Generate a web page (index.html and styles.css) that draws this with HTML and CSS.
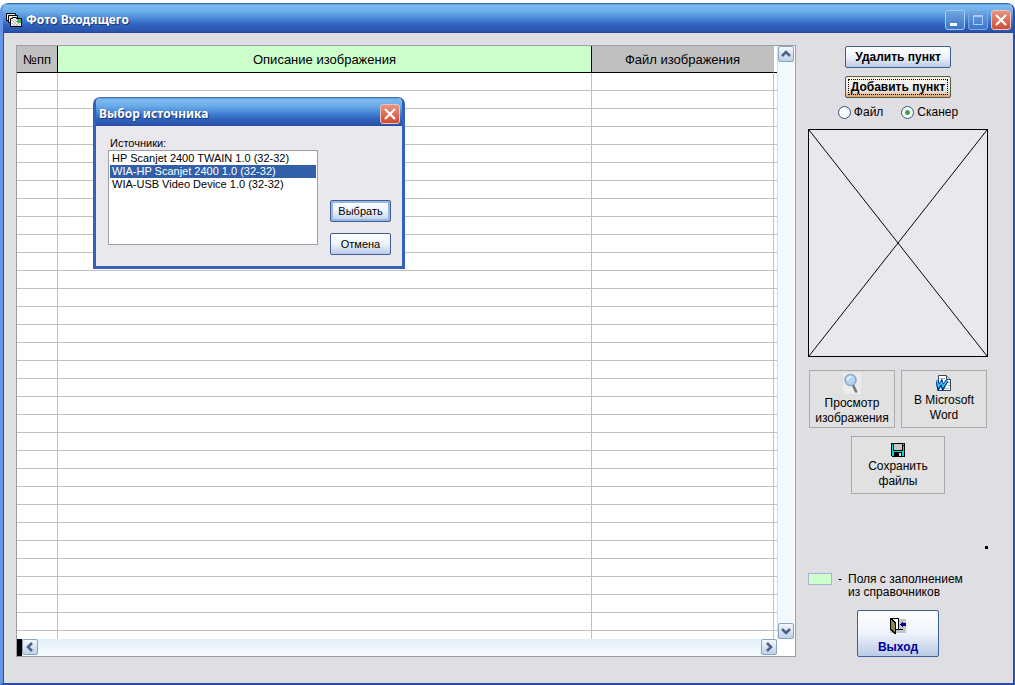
FILE: index.html
```html
<!DOCTYPE html>
<html lang="ru">
<head>
  <meta charset="UTF-8">
  <meta name="viewport" content="width=device-width, initial-scale=1.0">
  <title>Фото Входящего</title>
  <link rel="stylesheet" href="styles.css">
</head>
<body>

  <div class="window">

    <header class="titlebar">
      <svg class="app-icon" width="16" height="16" viewBox="0 0 16 16">
        <path d="M.5 1.500h9v7h-9z" fill="#d8f0d8" stroke="#000"/>
        <path d="M2.500 3.500h9v7h-9z" fill="#e8f4e8" stroke="#000"/>
        <path d="M4.500 6.500h2v-1h4v1h5v8h-11z" fill="#eef2ee" stroke="#000"/>
        <path d="M11 7h4v4h-4z" fill="#49b84e"/>
        <path d="M6 8l6 6M6 11l3 3M9 8l5 5" stroke="#9fb0a0"/>
      </svg>
      <h1>Фото Входящего</h1>
      <div class="caption-buttons">
        <button class="caption-btn" aria-label="Свернуть"><svg width="18" height="18" viewBox="0 0 18 18"><path d="M4 12h7v3H4z" fill="#fff"/></svg></button>
        <button class="caption-btn dim" aria-label="Развернуть"><svg width="18" height="18" viewBox="0 0 18 18"><path d="M4.500 4.500h9v9h-9zM4 5.500h10" fill="none" stroke="#a9cdf8"/></svg></button>
        <button class="caption-btn close" aria-label="Закрыть"><svg width="18" height="18" viewBox="0 0 18 18"><path d="M4 4l10 10M14 4L4 14" stroke="#fff" stroke-width="2.200"/></svg></button>
      </div>
    </header>

    <main class="client">

      <section class="grid">
        <div class="grid-body">
          <table>
            <thead>
              <tr>
                <th class="col-num">№пп</th>
                <th class="col-desc">Описание изображения</th>
                <th class="col-file">Файл изображения</th>
                <th class="col-end"></th>
              </tr>
            </thead>
            <tbody></tbody>
          </table>
        </div>

        <div class="scroll-v">
          <button class="arrow" aria-label="Вверх"><svg width="14" height="14" viewBox="0 0 14 14"><path d="M3 9l4-4 4 4" fill="none" stroke="#4d6185" stroke-width="2.500"/></svg></button>
          <button class="arrow" aria-label="Вниз"><svg width="14" height="14" viewBox="0 0 14 14"><path d="M3 5l4 4 4-4" fill="none" stroke="#4d6185" stroke-width="2.500"/></svg></button>
        </div>

        <div class="scroll-h">
          <button class="arrow" aria-label="Влево"><svg width="14" height="14" viewBox="0 0 14 14"><path d="M9 3L5 7l4 4" fill="none" stroke="#4d6185" stroke-width="2.500"/></svg></button>
          <button class="arrow" aria-label="Вправо"><svg width="14" height="14" viewBox="0 0 14 14"><path d="M5 3l4 4-4 4" fill="none" stroke="#4d6185" stroke-width="2.500"/></svg></button>
        </div>
      </section>

      <aside class="panel">
        <button class="btn btn-bold">Удалить пункт</button>
        <button class="btn btn-bold btn-active">Добавить пункт</button>

        <div class="radios">
          <label><input type="radio" name="source" value="file">Файл</label>
          <label><input type="radio" name="source" value="scanner" checked>Сканер</label>
        </div>

        <svg class="preview" viewBox="0 0 180 228" preserveAspectRatio="none">
          <path d="M0 0l180 228M180 0L0 228" stroke="#000"/>
        </svg>

        <div class="tools">
          <button class="tool">
            <svg width="18" height="21" viewBox="0 0 18 21">
              <path d="M0 0h18v21H0z" fill="#ececec"/>
              <path d="M10 12l3 6.500" stroke="#77777f" stroke-width="2.600" stroke-linecap="round"/>
              <circle cx="7.500" cy="7" r="5.500" fill="#b5d6f2" stroke="#8fa6cb" stroke-width="1.400"/>
              <path d="M4.500 7a3.500 3.500 0 0 1 4-3" fill="none" stroke="#f2f9ff" stroke-width="1.500"/>
            </svg>
            <span>Просмотр<br>изображения</span>
          </button>
          <button class="tool">
            <svg width="16" height="16" viewBox="0 0 16 16">
              <path d="M2.500 .5h8l4 4v11h-12z" fill="#fff" stroke="#33435e"/>
              <path d="M10.500 .5v4h4" fill="#cfd9ec" stroke="#33435e"/>
              <path d="M4 3.500h5M12 7.500h2M12 10.500h2M5 13.500h8" stroke="#a9b8d6"/>
              <path d="M1 5.500l1.500 7 3-5 1.500 5 4-7" fill="none" stroke="#0b2f86" stroke-width="3.400"/>
              <path d="M1 5.500l1.500 6 3-4 1.500 4 4-6" fill="none" stroke="#35c5f5" stroke-width="1.500"/>
            </svg>
            <span>В Microsoft<br>Word</span>
          </button>
        </div>
        <button class="tool tool-save">
          <svg width="14" height="14" viewBox="0 0 14 14" shape-rendering="crispEdges">
            <path d="M0 0h14v14H1L0 13z" fill="#000"/>
            <path d="M1 1h1v7h10V3h1v10h-2V9H3v4H1z" fill="#00d8d8"/>
            <path d="M3 1h8v6H3zM12 1h1v1h-1z" fill="#c6c6c6"/>
            <path d="M8 10h2v3H8z" fill="#d8d8d8"/>
          </svg>
          <span>Сохранить<br>файлы</span>
        </button>

        <i class="dot"></i>

        <div class="legend">
          <i class="swatch"></i>
          <span>-</span>
          <p>Поля с заполнением<br>из справочников</p>
        </div>

        <button class="btn exit">
          <svg width="16" height="16" viewBox="0 0 16 16" shape-rendering="crispEdges">
            <path d="M0 1h16v14H0z" fill="#c4c4c4"/>
            <path d="M0 0h9v11h4v1H0z" fill="#000"/>
            <path d="M3 1h5v10H3z" fill="#fff"/>
            <path d="M0 0h1l5 4v12H5l-5-4z" fill="#000"/>
            <path d="M1 2l4 3v9l-4-3z" fill="#8d8947"/>
            <path d="M10 6l3-3v2h3v3h-3v2z" fill="#000088"/>
          </svg>
          <span>Выход</span>
        </button>
      </aside>

    </main>

    <div class="dialog" role="dialog" aria-labelledby="dialog-title">
      <div class="titlebar dialog-title">
        <h2 id="dialog-title">Выбор источника</h2>
        <button class="caption-btn close" aria-label="Закрыть"><svg width="18" height="18" viewBox="0 0 18 18"><path d="M4 4l10 10M14 4L4 14" stroke="#fff" stroke-width="2.200"/></svg></button>
      </div>
      <div class="dialog-body">
        <div class="sources">
          <label for="sources">Источники:</label>
          <select id="sources" size="7">
            <option>HP Scanjet 2400 TWAIN 1.0 (32-32)</option>
            <option selected>WIA-HP Scanjet 2400 1.0 (32-32)</option>
            <option>WIA-USB Video Device 1.0 (32-32)</option>
          </select>
        </div>
        <div class="dialog-buttons">
          <button class="btn btn-default">Выбрать</button>
          <button class="btn">Отмена</button>
        </div>
      </div>
    </div>

  </div>

  <script>
    // пустые строки таблицы
    const tbody = document.querySelector("tbody")

    for(let i = 0; i < 32; i++){
      tbody.insertAdjacentHTML("beforeend", "<tr><td></td><td></td><td></td><td></td></tr>")
    }
  </script>
</body>
</html>
```

FILE: styles.css
```css
*{
  box-sizing: border-box;
}

body{
  margin: 0;
  padding-top: 3px;
  height: 100vh;
  background-color: #fff;
  color: #000;
  font-family: "Liberation Sans", Arial, sans-serif;
  font-size: 12px;
}

button, select, input{
  font: inherit;
  color: inherit;
  margin: 0;
  padding: 0;
}

h1, h2, p{
  margin: 0;
}

svg{
  display: block;
}

.window{
  position: relative;
  display: flex;
  flex-direction: column;
  height: 100%;
  border: 2px solid #2a4fa5;
  border-width: 0 2px 2px 3px;
  border-left-color: #6596e6;
  border-radius: 8px 8px 0 0;
  background-color: #dfdee3;
  overflow: hidden;
}

.titlebar{
  display: flex;
  align-items: center;
  gap: 4px;
  height: 30px;
  flex: none;
  padding: 4px 2px 0 3px;
  background: linear-gradient(#2c57a8 0, #7db9ee 2px, #6fb0ea 8px, #4585d6 16px, #2f62bd 22px, #2b55ad 28px, #23459a 100%);
}

.titlebar h1, .titlebar h2{
  flex: 1;
  font-family: "Noto Sans", Tahoma, sans-serif;
  font-size: 12px;
  line-height: 16px;
  font-weight: bold;
  color: #fff;
  text-shadow: 1px 1px 1px #173578;
}

.caption-buttons{
  display: flex;
  gap: 3px;
}

.caption-btn{
  width: 20px;
  height: 20px;
  border: 1px solid #a9cdf5;
  border-radius: 3px;
  background: linear-gradient(#6ea6e4, #3c74c9);
}

.caption-btn.dim{
  border-color: #78aae6;
}

.caption-btn.close{
  border-color: #f0c4bd;
  background: linear-gradient(#e89481, #d04a30);
}

.client{
  display: flex;
  gap: 12px;
  flex: 1;
  min-height: 0;
  padding: 12px 25px 26px 12px;
  border-left: 1px solid #2a4fa5;
}

/* таблица */

.grid{
  display: grid;
  grid-template-columns: 1fr 18px;
  grid-template-rows: 1fr 17px;
  flex: 1;
  min-width: 0;
  border: 1px solid #9c9ea6;
  background-color: #fff;
}

.grid-body{
  min-height: 0;
  overflow: hidden;
}

table{
  width: 100%;
  table-layout: fixed;
  border-collapse: separate;
  border-spacing: 0;
}

th{
  height: 27px;
  padding: 0;
  border-right: 1px solid #000;
  border-bottom: 1px solid #000;
  background-color: #c0c0c0;
  font-size: 13px;
  font-weight: normal;
}

.col-num{ width: 41px; }
.col-desc{ background-color: #ccffcc; }
.col-file{ width: 182px; border-right-color: #c0c0c0; }
.col-end{ width: 3px; border-right: 0; background-color: #fff; }

td{
  height: 18px;
  padding: 0;
  border-right: 1px solid #c0c0c0;
  border-bottom: 1px solid #c0c0c0;
}

td:last-child{
  border-right: 0;
}

.scroll-v, .scroll-h{
  display: flex;
  justify-content: space-between;
}

.scroll-v{
  flex-direction: column;
  width: 17px;
  border-left: 1px solid #d5e0ec;
  background-color: #f4f9fe;
}

.scroll-h{
  border-left: 5px solid #000;
  background: linear-gradient(#e1eefb, #fafdff);
}

.arrow{
  width: 16px;
  height: 16px;
  border: 1px solid #8ba3bd;
  border-radius: 2px;
  background: linear-gradient(#f2f8fd, #bed2e9);
}

/* правая панель */

.panel{
  display: flex;
  flex-direction: column;
  align-items: center;
  width: 180px;
}

.btn{
  height: 22px;
  border: 1px solid #3d5f93;
  border-radius: 2px;
  background: linear-gradient(#fff, #eef3fb 50%, #b9cbe6);
}

.btn-bold{
  width: 106px;
  margin-top: 1px;
  margin-bottom: 7px;
  font-weight: bold;
}

.btn-active{
  border-color: #4f5d4c;
  background: linear-gradient(#fdf3d6, #f3f3f3 30%, #e8e6e4 70%, #e0a25c);
  outline: 1px dotted #000;
  outline-offset: -4px;
}

.radios{
  display: flex;
  gap: 18px;
  height: 14px;
  margin-bottom: 10px;
}

.radios label{
  display: flex;
  align-items: center;
  gap: 3px;
}

.radios input{
  appearance: none;
  width: 13px;
  height: 13px;
  border: 1px solid #33567f;
  border-radius: 50%;
  background-color: #fbfcfd;
}

.radios input:checked{
  background: radial-gradient(#2fa32f 0, #3fae3f 2px, #fbfcfd 3px);
}

.preview{
  width: 100%;
  height: 228px;
  flex: none;
  margin-bottom: 13px;
  border: 1px solid #000;
  background-color: #e9e8ed;
}

.tools{
  display: flex;
  gap: 6px;
  margin-bottom: 8px;
}

.tool{
  display: flex;
  flex-direction: column;
  align-items: center;
  width: 86px;
  height: 58px;
  padding-top: 2px;
  border: 1px solid #a9a9a9;
  background-color: #e1e1e1;
  line-height: 15px;
}

.tool svg + span{
  margin-top: 2px;
}

.tool:nth-child(2){
  padding-top: 4px;
}

.tool-save{
  width: 94px;
  padding-top: 6px;
}

.dot{
  width: 3px;
  height: 3px;
  margin-top: 52px;
  margin-bottom: 24px;
  align-self: flex-end;
  background-color: #000;
}

.legend{
  display: flex;
  gap: 6px;
  width: 100%;
  margin-bottom: auto;
  line-height: 13px;
}

.swatch{
  width: 24px;
  height: 12px;
  border: 1px solid #a6b5cf;
  background-color: #ccffcc;
}

.exit{
  display: flex;
  flex-direction: column;
  align-items: center;
  gap: 6px;
  width: 82px;
  height: 47px;
  padding-top: 7px;
  font-weight: bold;
  color: #0000a0;
}

/* окно выбора источника */

.dialog{
  position: absolute;
  left: 90px;
  top: 94px;
  width: 312px;
  border: 3px solid #3263b8;
  border-top-width: 0;
  border-radius: 7px 7px 0 0;
  background-color: #e9e8ed;
  overflow: hidden;
  font-size: 11px;
}

.dialog-title{
  height: 29px;
}

.dialog-body{
  display: flex;
  justify-content: space-between;
  padding: 10px 11px 21px 12px;
}

.sources{
  display: flex;
  flex-direction: column;
}

.sources label{
  padding-left: 2px;
  line-height: 14px;
}

.sources select{
  width: 210px;
  height: 95px;
  padding: 1px;
  border: 1px solid #a0a0a4;
  border-radius: 0;
  background-color: #fff;
  overflow: hidden;
  outline: none;
}

.sources option{
  min-height: 13px;
  padding: 0 2px;
  line-height: 13px;
}

.sources option:checked{
  background-image: linear-gradient(#315fa8, #315fa8);
  -webkit-text-fill-color: #fff;
}

.dialog-buttons{
  display: flex;
  flex-direction: column;
  justify-content: flex-end;
  gap: 11px;
  width: 61px;
  margin-bottom: -10px;
}

.btn-default{
  box-shadow: inset 0 0 0 2px #9ab5e6;
}
```
